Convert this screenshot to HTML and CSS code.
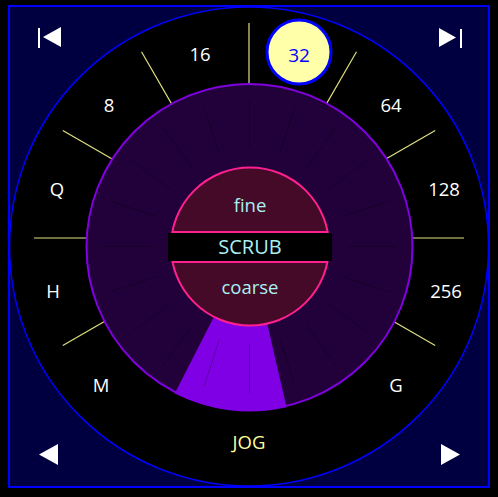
FILE: index.html
```html
<!DOCTYPE html>
<html lang="en">
<head>
  <meta charset="UTF-8">
  <title>Jog / Scrub Dial</title>
  <link rel="stylesheet" href="styles.css">
</head>
<body>
  <div class="frame">
    <svg class="dial" viewBox="10 7 478 479" width="478" height="479">
      <!-- outer ring -->
      <circle class="outer" cx="249" cy="246.5" r="239.5"/>

      <!-- speed ticks -->
      <g class="ticks">
        <line x1="249" y1="138" x2="249" y2="23"/>
        <line x1="199" y1="151.4" x2="141.5" y2="51.8"/>
        <line x1="162.4" y1="188" x2="62.8" y2="130.5"/>
        <line x1="149" y1="238" x2="34" y2="238"/>
        <line x1="162.4" y1="288" x2="62.8" y2="345.5"/>
        <line x1="299" y1="151.4" x2="356.5" y2="51.8"/>
        <line x1="335.6" y1="188" x2="435.2" y2="130.5"/>
        <line x1="349" y1="238" x2="464" y2="238"/>
        <line x1="335.6" y1="288" x2="435.2" y2="345.5"/>
      </g>

      <!-- speed labels -->
      <g class="labels">
        <text x="200" y="61">16</text>
        <text x="109" y="112">8</text>
        <text x="391" y="112">64</text>
        <text x="57" y="196">Q</text>
        <text x="444" y="196">128</text>
        <text x="53" y="298">H</text>
        <text x="446" y="298">256</text>
        <text x="101" y="392">M</text>
        <text x="396" y="392">G</text>
      </g>
      <text class="jog" x="249" y="449">JOG</text>

      <!-- selected speed -->
      <circle class="pick" cx="299" cy="52" r="32"/>
      <text class="pick-text" x="299" y="62">32</text>

      <!-- jog wheel -->
      <circle class="wheel" cx="249.5" cy="247" r="163"/>
      <path class="wedge" d="M249.5,247 L286.5,407.3 A164.5,164.5 0 0 1 174.8,393.6 Z"/>
      <g class="notches" id="notches"></g>

      <!-- scrub knob -->
      <circle class="knob" cx="250" cy="246.5" r="79"/>
      <rect class="band" x="168" y="233" width="164" height="28"/>
      <line class="band-edge" x1="172" y1="232" x2="328" y2="232"/>
      <line class="band-edge" x1="172" y1="262" x2="328" y2="262"/>
      <text class="knob-text" x="250" y="212">fine</text>
      <text class="knob-text scrub" x="250" y="254">SCRUB</text>
      <text class="knob-text" x="250" y="294">coarse</text>

      <!-- transport buttons -->
      <g class="btn">
        <rect x="38" y="28" width="2" height="20"/>
        <polygon points="61,27 61,47 43,37"/>
        <polygon points="439,28 439,47 456,37.5"/>
        <rect x="460" y="29" width="2" height="19"/>
        <polygon points="58,444 58,465 39,454.5"/>
        <polygon points="441,444 441,465 460,454.5"/>
      </g>
    </svg>
  </div>

  <script>
    // radial notches on the jog wheel, every 18 degrees
    const notches = document.getElementById('notches');
    let html = '';
    for (let a = 0; a < 360; a += 18) {
      const r = a * Math.PI / 180;
      const s = Math.sin(r), c = Math.cos(r);
      html += `<line x1="${(249.5 + 98 * s).toFixed(1)}" y1="${(246.5 - 98 * c).toFixed(1)}" x2="${(249.5 + 147 * s).toFixed(1)}" y2="${(246.5 - 147 * c).toFixed(1)}"/>`;
    }
    notches.innerHTML = html;
  </script>
</body>
</html>
```

FILE: styles.css
```css
body {
  margin: 0;
  background: #000;
  font-family: 'Open Sans', 'DejaVu Sans', sans-serif;
}
.frame {
  width: 478px;
  height: 479px;
  margin: 5px 0 0 8px;
  border: 2px solid #0000ff;
  background: #000040;
}
.dial {
  display: block;
}
.outer {
  fill: #000;
  stroke: #0000ff;
  stroke-width: 1.5;
}
.ticks line {
  stroke: #e0e080;
  stroke-width: 1.2;
}
.labels text {
  fill: #fff;
  font-size: 18.5px;
  text-anchor: middle;
}
.jog {
  fill: #ffff99;
  font-size: 18.5px;
  text-anchor: middle;
}
.pick {
  fill: #ffffaa;
  stroke: #0000ff;
  stroke-width: 3;
}
.pick-text {
  fill: #0000ff;
  font-size: 19px;
  text-anchor: middle;
}
.wheel {
  fill: #22003a;
  stroke: #8000e0;
  stroke-width: 2;
}
.wedge {
  fill: #8000e6;
}
.notches line {
  stroke: #000;
  stroke-opacity: 0.28;
  stroke-width: 1;
}
.knob {
  fill: #440a28;
  stroke: #ff2090;
  stroke-width: 2;
}
.band {
  fill: #000;
}
.band-edge {
  stroke: #ff2090;
  stroke-width: 2;
}
.knob-text {
  fill: #aaf0f0;
  font-size: 18.5px;
  text-anchor: middle;
}
.scrub {
  font-size: 20px;
}
.btn {
  fill: #fff;
}
```
